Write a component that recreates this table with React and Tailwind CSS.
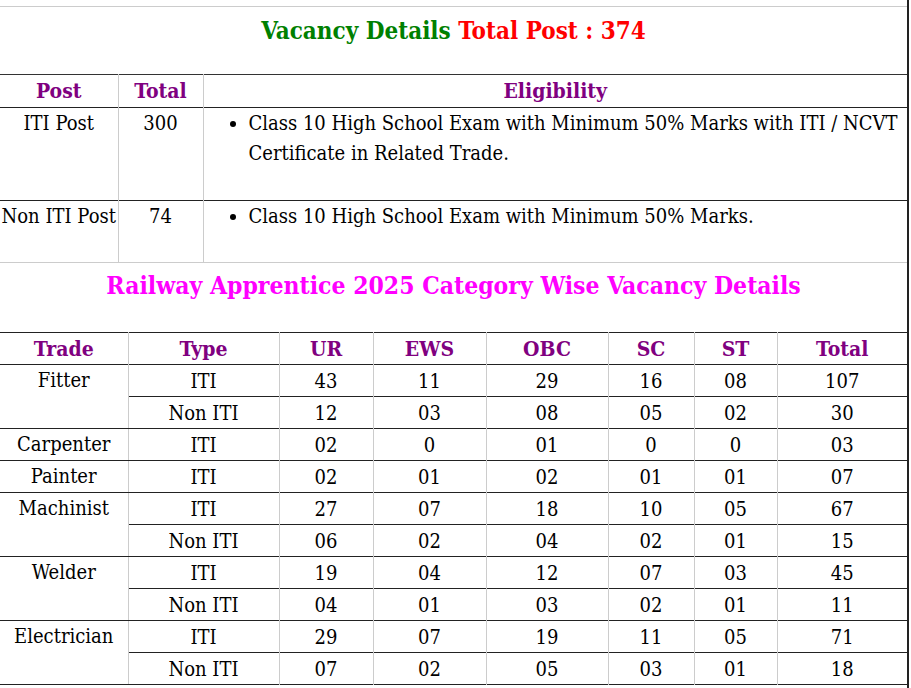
import React from 'react';

const rows = [
    {trade: 'Fitter', span: 2, type: 'ITI', nums: ['43', '11', '29', '16', '08', '107']},
    {type: 'Non ITI', nums: ['12', '03', '08', '05', '02', '30']},
    {trade: 'Carpenter', span: 1, type: 'ITI', nums: ['02', '0', '01', '0', '0', '03']},
    {trade: 'Painter', span: 1, type: 'ITI', nums: ['02', '01', '02', '01', '01', '07']},
    {trade: 'Machinist', span: 2, type: 'ITI', nums: ['27', '07', '18', '10', '05', '67']},
    {type: 'Non ITI', nums: ['06', '02', '04', '02', '01', '15']},
    {trade: 'Welder', span: 2, type: 'ITI', nums: ['19', '04', '12', '07', '03', '45']},
    {type: 'Non ITI', nums: ['04', '01', '03', '02', '01', '11']},
    {trade: 'Electrician', span: 2, type: 'ITI', nums: ['29', '07', '19', '11', '05', '71']},
    {type: 'Non ITI', nums: ['07', '02', '05', '03', '01', '18']},
];

const heads = ['Trade', 'Type', 'UR', 'EWS', 'OBC', 'SC', 'ST', 'Total'];

const head = "font-['DejaVu_Serif_Condensed','DejaVu_Serif',serif] font-stretch-condensed font-bold";

const App = () => {
    return (
        <div className="w-[911px] h-[688px] overflow-hidden bg-white font-['DejaVu_Serif_Condensed','DejaVu_Serif',serif] font-stretch-condensed text-[20px] text-black">
            <div className="w-[909px] h-full border-r-2 border-[#222] pt-[6px]">

                <table className="w-[907px] table-fixed border-collapse">
                    <colgroup>
                        <col className="w-[118px]"/>
                        <col className="w-[85px]"/>
                        <col className="w-[704px]"/>
                    </colgroup>
                    <tbody>
                        <tr className="border-t border-[#ccc] border-b border-b-[#333]">
                            <td colSpan={3} className={`${head} text-center text-[24px] leading-[32px] pt-[8px] pb-[27px]`}>
                                <span className="text-[#008000]">Vacancy Details</span>{' '}
                                <span className="text-[#ff0000]">Total Post : 374</span>
                            </td>
                        </tr>
                        <tr className="border-b border-[#222]">
                            <td className={`${head} text-[#800080] text-center text-[21px] h-[32px] p-0`}>Post</td>
                            <td className={`${head} text-[#800080] text-center text-[21px] border-l border-[#ccc] p-0`}>Total</td>
                            <td className={`${head} text-[#800080] text-center text-[21px] border-l border-[#ccc] p-0`}>Eligibility</td>
                        </tr>
                        <tr className="border-b border-[#222] align-top">
                            <td className="text-center leading-[30px] p-0 whitespace-nowrap">ITI Post</td>
                            <td className="text-center leading-[30px] p-0 border-l border-[#ccc]">300</td>
                            <td className="leading-[30px] p-0 pb-[32px] border-l border-[#ccc]">
                                <ul className="list-disc pl-[45px] pr-[2px]">
                                    <li>Class 10 High School Exam with Minimum 50% Marks with ITI / NCVT Certificate in Related Trade.</li>
                                </ul>
                            </td>
                        </tr>
                        <tr className="border-b border-[#ccc] align-top">
                            <td className="text-center leading-[30px] p-0 whitespace-nowrap">Non ITI Post</td>
                            <td className="text-center leading-[30px] p-0 border-l border-[#ccc]">74</td>
                            <td className="leading-[30px] p-0 pb-[31px] border-l border-[#ccc]">
                                <ul className="list-disc pl-[45px] pr-[2px]">
                                    <li>Class 10 High School Exam with Minimum 50% Marks.</li>
                                </ul>
                            </td>
                        </tr>
                    </tbody>
                </table>

                <table className="w-[907px] table-fixed border-collapse">
                    <colgroup>
                        <col className="w-[128px]"/>
                        <col className="w-[151px]"/>
                        <col className="w-[94px]"/>
                        <col className="w-[113px]"/>
                        <col className="w-[122px]"/>
                        <col className="w-[86px]"/>
                        <col className="w-[83px]"/>
                        <col className="w-[130px]"/>
                    </colgroup>
                    <tbody>
                        <tr className="border-b border-[#222]">
                            <td colSpan={8} className={`${head} text-[#ff00ff] text-center text-[24.5px] leading-[32px] pt-[7px] pb-[30px]`}>
                                Railway Apprentice 2025 Category Wise Vacancy Details
                            </td>
                        </tr>
                        <tr className="border-b border-[#222]">
                            {heads.map((h, i) => (
                                <td key={h} className={`${head} text-[#800080] text-center text-[21px] h-[32px] p-0 ${i > 0 ? 'border-l border-[#ccc]' : ''}`}>{h}</td>
                            ))}
                        </tr>
                        {rows.map((r, idx) => (
                            <tr key={idx} className="border-b border-[#222]">
                                {r.trade && (
                                    <td rowSpan={r.span} className="text-center align-top leading-[30px] p-0 border-b border-[#222]">{r.trade}</td>
                                )}
                                <td className="text-center leading-[30px] h-[32px] p-0 border-l border-[#ccc]">{r.type}</td>
                                {r.nums.map((n, j) => (
                                    <td key={j} className="text-center leading-[30px] p-0 border-l border-[#ccc]">{n}</td>
                                ))}
                            </tr>
                        ))}
                    </tbody>
                </table>

            </div>
        </div>
    )
}

export default App
